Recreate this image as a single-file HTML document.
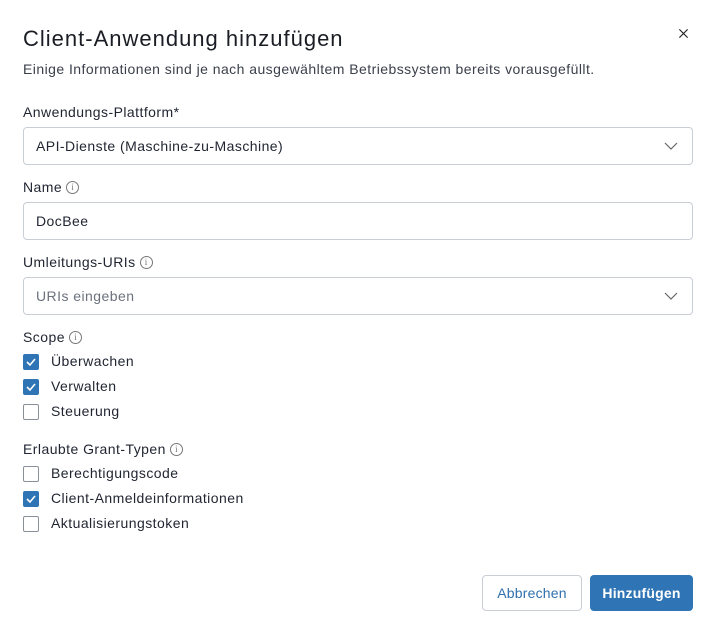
<!DOCTYPE html>
<html><head><meta charset="utf-8"><style>
*{margin:0;padding:0;box-sizing:border-box}
body{width:714px;height:633px;background:#fff;font-family:"Liberation Sans",sans-serif;color:#1f2430;position:relative;overflow:hidden;letter-spacing:0.45px}
.a{position:absolute;white-space:nowrap}
.t{left:23px;top:26px;font-size:22px;color:#1a1d24;letter-spacing:1px}
.s{left:23px;top:61px;font-size:14px;color:#3a3f4a}
.l{left:23px;font-size:14px;color:#1f2430;display:flex;align-items:center;gap:4px}
.box{left:23px;width:670px;height:38px;border:1px solid #c9ced6;border-radius:4px;font-size:14px;padding-left:12px;display:flex;align-items:center}
.chev{position:absolute;right:14px;top:12px}
.i{display:inline-block;width:13px;height:13px;border:1px solid #777;border-radius:50%;font-size:9px;line-height:11px;text-align:center;color:#777;font-family:"Liberation Serif",serif;letter-spacing:0}
.cb{left:23px;width:16px;height:16px;border:1px solid #8a9099;border-radius:2px;background:#fff}
.cb.on{background:#2f75b5;border-color:#2f75b5}
.ct{left:51px;font-size:14px}
.btn{top:575px;height:36px;border-radius:4px;font-size:14px;display:flex;align-items:center;justify-content:center;letter-spacing:0.2px}
</style></head><body>
<div class="a t">Client-Anwendung hinzufügen</div>
<svg class="a" style="left:678px;top:28px" width="11" height="11" viewBox="0 0 12 12"><path d="M1.5 1.5L10.5 10.5M10.5 1.5L1.5 10.5" stroke="#222" stroke-width="1.3"/></svg>
<div class="a s">Einige Informationen sind je nach ausgewähltem Betriebssystem bereits vorausgefüllt.</div>

<div class="a l" style="top:104px">Anwendungs-Plattform*</div>
<div class="a box" style="top:127px">API-Dienste (Maschine-zu-Maschine)<svg class="chev" width="14" height="12" viewBox="0 0 14 12"><path d="M1 3l6 6 6-6" stroke="#666" fill="none" stroke-width="1.2"/></svg></div>

<div class="a l" style="top:179px">Name <span class="i">i</span></div>
<div class="a box" style="top:202px">DocBee</div>

<div class="a l" style="top:254px">Umleitungs-URIs <span class="i">i</span></div>
<div class="a box" style="top:277px;color:#6b717c">URIs eingeben<svg class="chev" width="14" height="12" viewBox="0 0 14 12"><path d="M1 3l6 6 6-6" stroke="#666" fill="none" stroke-width="1.2"/></svg></div>

<div class="a l" style="top:329px">Scope <span class="i">i</span></div>
<div class="a cb on" style="top:354px"><svg width="14" height="14" viewBox="0 0 14 14"><path d="M3 7l3 3 5-6" stroke="#fff" fill="none" stroke-width="1.6"/></svg></div><div class="a ct" style="top:353px">Überwachen</div>
<div class="a cb on" style="top:379px"><svg width="14" height="14" viewBox="0 0 14 14"><path d="M3 7l3 3 5-6" stroke="#fff" fill="none" stroke-width="1.6"/></svg></div><div class="a ct" style="top:378px">Verwalten</div>
<div class="a cb" style="top:404px"></div><div class="a ct" style="top:403px">Steuerung</div>

<div class="a l" style="top:441px">Erlaubte Grant-Typen <span class="i">i</span></div>
<div class="a cb" style="top:466px"></div><div class="a ct" style="top:465px">Berechtigungscode</div>
<div class="a cb on" style="top:491px"><svg width="14" height="14" viewBox="0 0 14 14"><path d="M3 7l3 3 5-6" stroke="#fff" fill="none" stroke-width="1.6"/></svg></div><div class="a ct" style="top:490px">Client-Anmeldeinformationen</div>
<div class="a cb" style="top:516px"></div><div class="a ct" style="top:515px">Aktualisierungstoken</div>

<div class="a btn" style="left:482px;width:100px;border:1px solid #c9ced6;color:#2f6fae">Abbrechen</div>
<div class="a btn" style="left:590px;width:103px;background:#2f75b5;color:#fff;font-weight:bold">Hinzufügen</div>
</body></html>
